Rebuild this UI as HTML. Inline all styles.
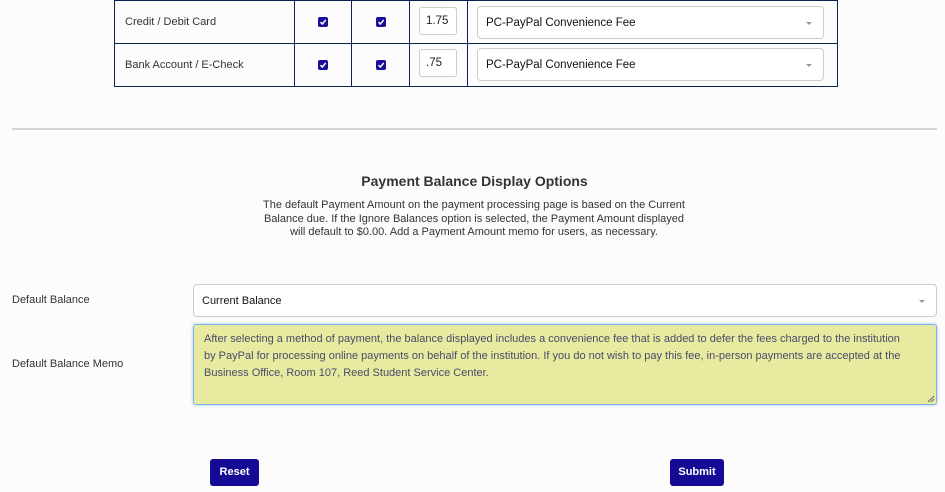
<!DOCTYPE html>
<html><head><meta charset="utf-8"><style>
body{margin:0;width:945px;height:492px;background:#fcfcfc;font-family:"Liberation Sans",Arial,sans-serif;position:relative;overflow:hidden;color:#333}
.a{position:absolute}
.vl{position:absolute;top:0;width:1px;height:87px;background:#0b2352}
.hl{position:absolute;left:114px;width:724px;height:1px;background:#0b2352}
.cb{position:absolute;width:10px;height:10px;background:#1a0d99;border-radius:2px}
.cb svg{position:absolute;left:1px;top:1px}
.inp{position:absolute;background:#fff;border:1px solid #ccc;border-radius:3px;font-size:12px;color:#222;box-sizing:border-box;padding-left:6px}
.sel{position:absolute;background:#fff;border:1px solid #ccc;border-radius:4px;font-size:11.5px;color:#111;box-sizing:border-box;padding-left:8px}
.arr{position:absolute;right:11px;top:50%;margin-top:-1px;width:0;height:0;border-left:3px solid transparent;border-right:3px solid transparent;border-top:3px solid #999}
.lbl{position:absolute;font-size:11px;color:#333}
.btn{position:absolute;background:#140a96;color:#fff;font-size:11px;font-weight:bold;border-radius:3px;text-align:center;line-height:27px;height:27px}
</style></head><body>
<div class="vl" style="left:114px"></div>
<div class="vl" style="left:294px"></div>
<div class="vl" style="left:351px"></div>
<div class="vl" style="left:409px"></div>
<div class="vl" style="left:467px"></div>
<div class="vl" style="left:837px"></div>
<div class="hl" style="top:0"></div>
<div class="hl" style="top:43px"></div>
<div class="hl" style="top:86px"></div>
<div class="lbl" style="left:125px;top:16px">Credit / Debit Card</div>
<div class="lbl" style="left:125px;top:59px">Bank Account / E-Check</div>
<div class="cb" style="left:318px;top:17px"><svg width="8" height="8"><path d="M1.5 4.2 L3.3 6 L6.7 2" stroke="#fff" stroke-width="1.5" fill="none"/></svg></div>
<div class="cb" style="left:376px;top:17px"><svg width="8" height="8"><path d="M1.5 4.2 L3.3 6 L6.7 2" stroke="#fff" stroke-width="1.5" fill="none"/></svg></div>
<div class="cb" style="left:318px;top:60px"><svg width="8" height="8"><path d="M1.5 4.2 L3.3 6 L6.7 2" stroke="#fff" stroke-width="1.5" fill="none"/></svg></div>
<div class="cb" style="left:376px;top:60px"><svg width="8" height="8"><path d="M1.5 4.2 L3.3 6 L6.7 2" stroke="#fff" stroke-width="1.5" fill="none"/></svg></div>
<div class="inp" style="left:419px;top:7px;width:38px;height:28px;line-height:26px;font-size:11.5px">1.75</div>
<div class="inp" style="left:419px;top:49px;width:38px;height:28px;line-height:26px;font-size:11.5px">.75</div>
<div class="sel" style="left:477px;top:6px;width:347px;height:33px;line-height:33px">PC-PayPal Convenience Fee<div class="arr"></div></div>
<div class="sel" style="left:477px;top:48px;width:347px;height:33px;line-height:33px">PC-PayPal Convenience Fee<div class="arr"></div></div>
<div class="a" style="left:12px;top:128px;width:925px;height:2px;background:#d4d4d4"></div>
<div class="a" style="left:0;width:949px;top:173px;text-align:center;font-size:14px;font-weight:bold;color:#333">Payment Balance Display Options</div>
<div class="a" style="left:256px;width:436px;top:199px;text-align:center;font-size:11px;line-height:13.5px;color:#333">The default Payment Amount on the payment processing page is based on the Current Balance due. If the Ignore Balances option is selected, the Payment Amount displayed will default to $0.00. Add a Payment Amount memo for users, as necessary.</div>
<div class="lbl" style="left:12px;top:294px">Default Balance</div>
<div class="lbl" style="left:12px;top:358px">Default Balance Memo</div>
<div class="sel" style="left:193px;top:284px;width:744px;height:33px;line-height:33px;font-size:11px">Current Balance<div class="arr"></div></div>
<div class="a" style="left:193px;top:324px;width:744px;height:81px;box-sizing:border-box;background:#e8eb9f;border:1px solid #7fb2ea;box-shadow:0 0 3px #9cc6f2;border-radius:3px;padding:6px 22px 5px 10px;font-size:11px;line-height:17px;color:#4a4a6a">After selecting a method of payment, the balance displayed includes a convenience fee that is added to defer the fees charged to the institution by PayPal for processing online payments on behalf of the institution. If you do not wish to pay this fee, in-person payments are accepted at the Business Office, Room 107, Reed Student Service Center.
<svg class="a" style="right:1px;bottom:1px" width="8" height="8"><path d="M7 1L1 7M7 4L4 7" stroke="#666" stroke-width="1"/></svg></div>
<div class="btn" style="left:210px;top:459px;width:49px">Reset</div>
<div class="btn" style="left:670px;top:459px;width:54px">Submit</div>
</body></html>
